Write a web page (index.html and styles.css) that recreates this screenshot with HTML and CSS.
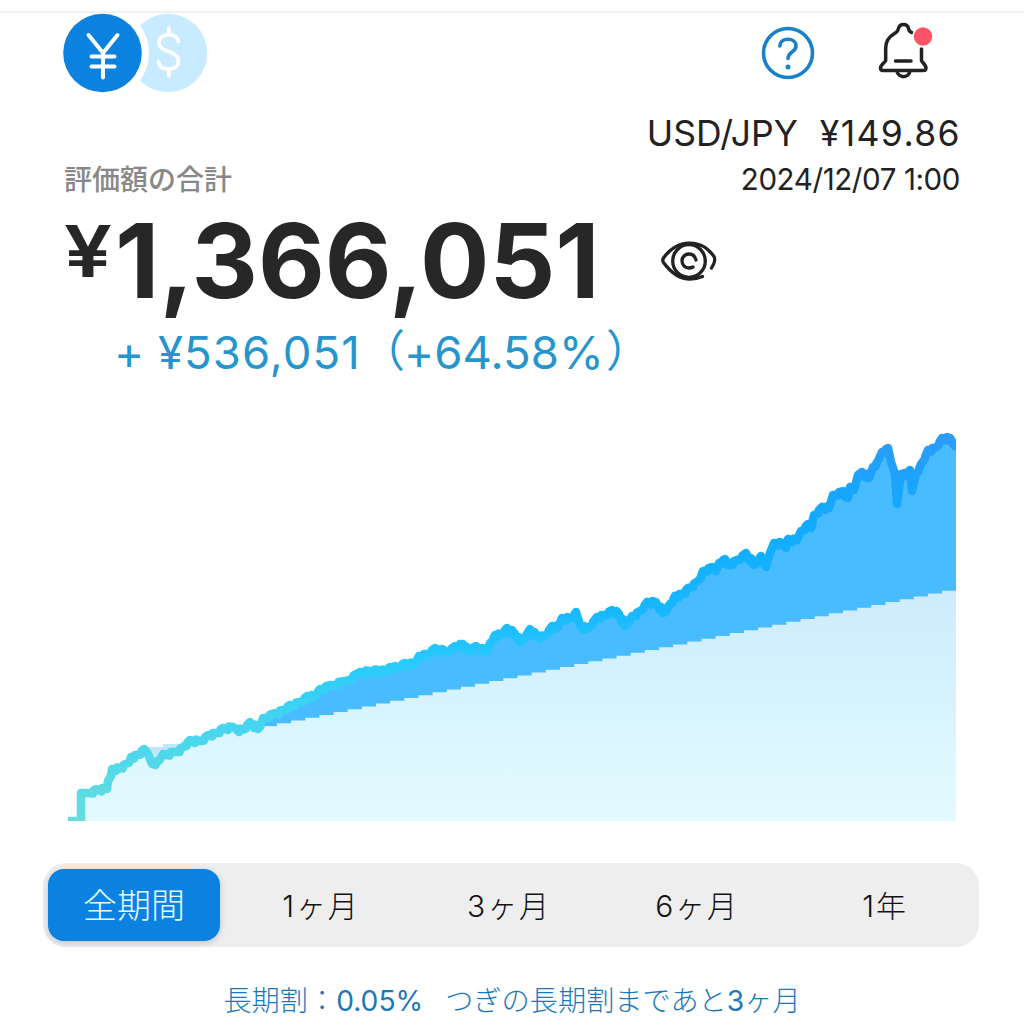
FILE: index.html
```html
<!DOCTYPE html>
<html lang="ja">
<head>
    <meta charset="UTF-8">
    <meta name="viewport" content="width=device-width, initial-scale=1.0">
    <title>評価額の合計</title>
    <link rel="stylesheet" href="styles.css">
</head>
<body>
    <div class="screen">
        <header class="topbar">
            <svg class="currency" width="148" height="80" viewBox="0 0 148 80">
                <circle cx="105" cy="40" r="39.3" fill="#c9ebff"/>
                <circle cx="39.5" cy="40" r="46.5" fill="#fff"/>
                <circle cx="39.5" cy="40" r="39.3" fill="#0b82e0"/>
                <g fill="none" stroke="#fff" stroke-width="4" stroke-linecap="round" stroke-linejoin="round">
                    <path d="M25.500 22L40 40L54.500 22M40 40V64.500M28.500 43.500H51.500M28.500 53.500H51.500"/>
                    <path stroke-width="3.700" d="M115.500 28.500C114.500 24 110.500 21.800 105.800 21.800C100 21.800 96 24.800 96 29.500C96 35 101 36.800 105.500 38.500C111 40.500 115.500 42.800 115.500 48C115.500 53 111.500 56 105.800 56C100 56 96 53.500 95.500 48.500M105.800 15V21M105.800 56.500V63"/>
                </g>
            </svg>
            <div class="actions">
                <svg width="54" height="54" viewBox="0 0 54 54" fill="none" stroke="#1b80c7" stroke-linecap="round">
                    <circle cx="27" cy="27" r="24.500" stroke-width="3.600"/>
                    <path d="M18.800 20C19 15.500 22.500 13.300 27 13.300C31.500 13.300 35 16 35 20C35 26.500 27 25.500 27 32.500" stroke-width="3.600"/>
                    <circle cx="27" cy="41" r="2.500" fill="#1b80c7" stroke="none"/>
                </svg>
                <svg width="58" height="60" viewBox="0 0 58 60" fill="none" stroke="#222" stroke-width="3.500" stroke-linecap="round" stroke-linejoin="round">
                    <path d="M34.500 13.500C32.500 12.800 32 11.800 31.700 10C31 6.500 29 5.500 26.500 5.500C24 5.500 22 6.500 21.300 10C21 12 20 13 17.500 14.500C11.500 18 8.700 22.500 8.700 29V41.500C8.700 43 3.500 45.500 3.500 49C3.500 50.700 4.200 51.500 6 51.500H46.500C48.300 51.500 49 50.700 49 49C49 45.500 44.500 43 44.500 41.500V30"/>
                    <path d="M18.500 42H34M20 52C21 59.500 32 59.500 33 52"/>
                    <circle cx="46" cy="17.500" r="9.200" fill="#fb5468" stroke="none"/>
                </svg>
            </div>
        </header>

        <section class="rate">
            <div class="rate-value"><span>USD/JPY</span><span class="rate-yen">¥149.86</span></div>
            <div class="rate-row">
                <span class="total-label">評価額の合計</span>
                <span class="rate-date">2024/12/07 1:00</span>
            </div>
        </section>

        <section class="total">
            <span class="total-yen">¥</span>
            <span class="total-amount">1,366,051</span>
            <svg class="eye" width="58" height="42" viewBox="0 0 58 42" fill="none" stroke="#222" stroke-width="3.300" stroke-linecap="round">
                <path d="M42.500 36.500C27 43 14 37 3.500 22.500C2.500 21 2.500 19.500 3.500 18C17 -1 41 -2 54 16.500C56 20 54 24 51.500 28"/>
                <circle cx="29" cy="21" r="16.300"/>
                <path d="M36 20C35 15.800 32 14 29 14C25 14 22 17 22 21C22 25 25 28 29 28C30.500 28 32 27.500 33 27"/>
            </svg>
        </section>
        <div class="gain"><span class="gain-sign">+</span><span class="gain-yen">¥536,051</span><span class="paren">（</span><span class="gain-rate">+64.58%</span><span class="paren">）</span></div>

        <svg class="chart" id="chart" width="900" height="400" viewBox="62 425 900 400">
            <defs>
                <linearGradient id="line-color" gradientUnits="userSpaceOnUse" x1="0" y1="821" x2="0" y2="435">
                    <stop offset="0" stop-color="#65dedf"/>
                    <stop offset="0.25" stop-color="#45d5ef"/>
                    <stop offset="0.4" stop-color="#2accfc"/>
                    <stop offset="0.55" stop-color="#17b7ff"/>
                    <stop offset="0.8" stop-color="#12a9ff"/>
                    <stop offset="1" stop-color="#2b9cf9"/>
                </linearGradient>
                <linearGradient id="base-color" gradientUnits="userSpaceOnUse" x1="0" y1="591" x2="0" y2="821">
                    <stop offset="0" stop-color="#cdebfc"/>
                    <stop offset="0.5" stop-color="#d7f4fe"/>
                    <stop offset="1" stop-color="#e3fbff"/>
                </linearGradient>
                <clipPath id="plot"><path d="M62 425H956V821H62Z"/></clipPath>
            </defs>
            <g clip-path="url(#plot)">
                <path id="value-area" fill="#49bbff"/>
                <path id="base-area" fill="url(#base-color)"/>
                <path d="M146 757L148 747H163V744H181V741H190L180 752L158 764Z" fill="#bfe6fa"/>
                <polyline id="value-line" fill="none" stroke="url(#line-color)" stroke-width="8.500" stroke-linejoin="round"/>
            </g>
        </svg>

        <nav class="tabs">
            <button class="tab active">全期間</button>
            <button class="tab">1ヶ月</button>
            <button class="tab">3ヶ月</button>
            <button class="tab">6ヶ月</button>
            <button class="tab">1年</button>
        </nav>

        <p class="discount"><span>長期割：<span class="num">0.05%</span></span><span>つぎの長期割まであと<span class="num">3</span>ヶ月</span></p>
    </div>
    <script src="chart.js"></script>
</body>
</html>
```
FILE: styles.css
```css
* {
    box-sizing: border-box;
}

body {
    margin: 0;
    background: #fff;
    color: #222;
    font-family: Inter, "Noto Sans CJK JP", sans-serif;
}

svg {
    display: block;
    flex: none;
}

.screen {
    width: 1024px;
    height: 1024px;
    padding-top: 11px;
    overflow: hidden;
}

.topbar {
    display: flex;
    justify-content: space-between;
    height: 97px;
    padding: 1px 89px 0 63px;
    border-top: 2px solid #f0f0f0;
}

.currency {
    margin-top: -1px;
}

.actions {
    display: flex;
    gap: 62px;
    padding-top: 12px;
}

.actions svg:last-child {
    margin-top: -7px;
}

.rate {
    padding: 0 64px;
}

.rate-value {
    display: flex;
    justify-content: flex-end;
    gap: 22px;
    height: 50px;
    font-size: 35.5px;
    line-height: 51px;
}

.rate-yen {
    margin-right: -1px;
    letter-spacing: 1.4px;
}

.rate-row {
    display: flex;
    justify-content: space-between;
    height: 44px;
    line-height: 42px;
}

.total-label {
    color: #888;
    font-size: 28px;
    font-weight: 500;
    line-height: 44px;
}

.rate-date {
    font-size: 29.5px;
    letter-spacing: -0.4px;
}

.total {
    display: flex;
    align-items: flex-start;
    height: 122px;
    padding-left: 64px;
    color: #272727;
    font-weight: 700;
    white-space: nowrap;
}

.total-yen {
    width: 51px;
    font-size: 71px;
    font-weight: 600;
    line-height: 98px;
    transform: scaleX(1.2);
    transform-origin: 0 0;
}

.total-amount {
    width: 490px;
    font-size: 103px;
    line-height: 118px;
}

.eye {
    margin: 38px 0 0 55px;
}

.gain {
    display: flex;
    height: 101px;
    padding-left: 114px;
    color: #2795cd;
    font-size: 45.5px;
    line-height: 57px;
    white-space: nowrap;
}

.gain-sign {
    width: 44px;
}

.gain-yen {
    width: 203px;
    letter-spacing: 1.05px;
}

.paren {
    width: 43px;
    font-size: 44px;
    line-height: 54px;
}

.gain-rate {
    width: 202px;
    letter-spacing: 0.1px;
}

.chart {
    margin-left: 62px;
}

.tabs {
    display: grid;
    grid-template-columns: 178px repeat(4, 188px);
    width: 936px;
    height: 84px;
    margin: 38px 0 0 43px;
    padding: 6px 0 6px 5px;
    border-radius: 23px;
    background: #eee;
}

.tab {
    padding: 0 0 3px 2px;
    border: none;
    background: none;
    color: #111;
    font-family: inherit;
    font-size: 30px;
    font-weight: 300;
    letter-spacing: 1.9px;
}

.tab.active {
    width: 172px;
    padding-left: 0;
    border-radius: 16px;
    background: #0b82e0;
    color: #e6fbff;
    font-size: 34px;
    letter-spacing: 0;
    box-shadow: 0 2px 6px rgba(0, 60, 120, 0.22);
}

.discount {
    display: flex;
    justify-content: center;
    gap: 22px;
    margin: 31px 0 0;
    color: #1d78b8;
    font-size: 28.2px;
    font-weight: 300;
    line-height: 46px;
    white-space: nowrap;
}

.num {
    font-weight: 400;
}
```
FILE: chart.js
```js
// portfolio value over time, in chart units
const values = [
    [81, 821], [81, 793], [90, 793], [96, 789], [107, 789], [108, 781], [111, 776], [112, 769], [120, 768],
    [125, 764], [129, 763], [131, 757], [137, 755], [144, 749], [148, 754], [152, 764], [159, 761], [163, 754],
    [176, 752], [183, 747], [190, 740], [200, 741], [208, 735], [216, 733], [223, 728], [233, 727], [236, 729],
    [242, 730], [250, 722], [258, 729], [263, 718], [275, 713], [283, 710], [290, 705], [300, 702], [307, 696],
    [314, 696], [320, 689], [330, 685], [345, 681], [360, 672], [370, 671], [378, 670], [385, 671], [390, 667],
    [398, 667], [405, 663], [415, 664], [419, 656], [427, 654], [435, 648], [447, 652], [455, 646], [463, 644],
    [468, 651], [476, 646], [487, 652], [490, 643], [495, 635], [501, 634], [507, 628], [515, 634], [521, 642],
    [530, 629], [537, 637], [544, 636], [552, 626], [558, 627], [562, 618], [571, 618], [576, 612], [580, 625],
    [587, 629], [597, 617], [604, 615], [612, 610], [619, 614], [625, 626], [632, 616], [640, 611], [647, 602],
    [656, 602], [663, 613], [670, 604], [675, 596], [682, 594], [688, 588], [698, 581], [703, 571], [712, 567],
    [716, 571], [719, 563], [725, 559], [728, 565], [737, 560], [746, 553], [754, 565], [761, 556], [766, 567],
    [770, 553], [774, 543], [783, 543], [786, 548], [788, 539], [797, 540], [801, 531], [808, 524], [811, 528],
    [814, 515], [822, 507], [829, 508], [833, 495], [843, 491], [848, 498], [850, 487], [854, 490], [858, 475],
    [862, 472], [869, 478], [873, 467], [878, 461], [882, 452], [888, 448], [891, 462], [895, 474], [897, 504],
    [901, 474], [906, 474], [910, 470], [912, 491], [916, 474], [921, 464], [928, 450], [935, 448], [942, 438],
    [950, 438], [953, 444], [958, 444]
];

// daily noise between the main points
const line = [];
values.forEach((p, i) => {
    line.push(p);
    const next = values[i + 1];
    if (next && p[0] > 82 && next[0] - p[0] > 4) {
        line.push([(p[0] + next[0]) / 2, (p[1] + next[1]) / 2 + 2.5]);
        line.push([(p[0] + next[0]) / 2 + 1, (p[1] + next[1]) / 2 - 1]);
    }
});

// invested principal, one step per deposit
const STEP_W = 14.15;
const STEP_H = 2.82;
const steps = [[956, 590.8]];
for (let i = 0; i < 48; i++) {
    const x = 942 - STEP_W * i;
    steps.push([x, 590.8 + STEP_H * i], [x, 590.8 + STEP_H * (i + 1)]);
}
steps.push([264, 726]);

const toPath = points => 'M' + points.map(p => p.join(' ')).join('L');

// before x = 265 the value is at or below the principal
const early = line.filter(p => p[0] < 265).reverse();
const late = line.filter(p => p[0] > 260);

document.getElementById('value-area').setAttribute('d', toPath([...late, [958, 730], [264, 730]]) + 'Z');
document.getElementById('base-area').setAttribute('d', toPath([...steps, ...early, [956, 821]]) + 'Z');
document.getElementById('value-line').setAttribute('points', '68,821 ' + line.map(p => p.join(',')).join(' '));
```
